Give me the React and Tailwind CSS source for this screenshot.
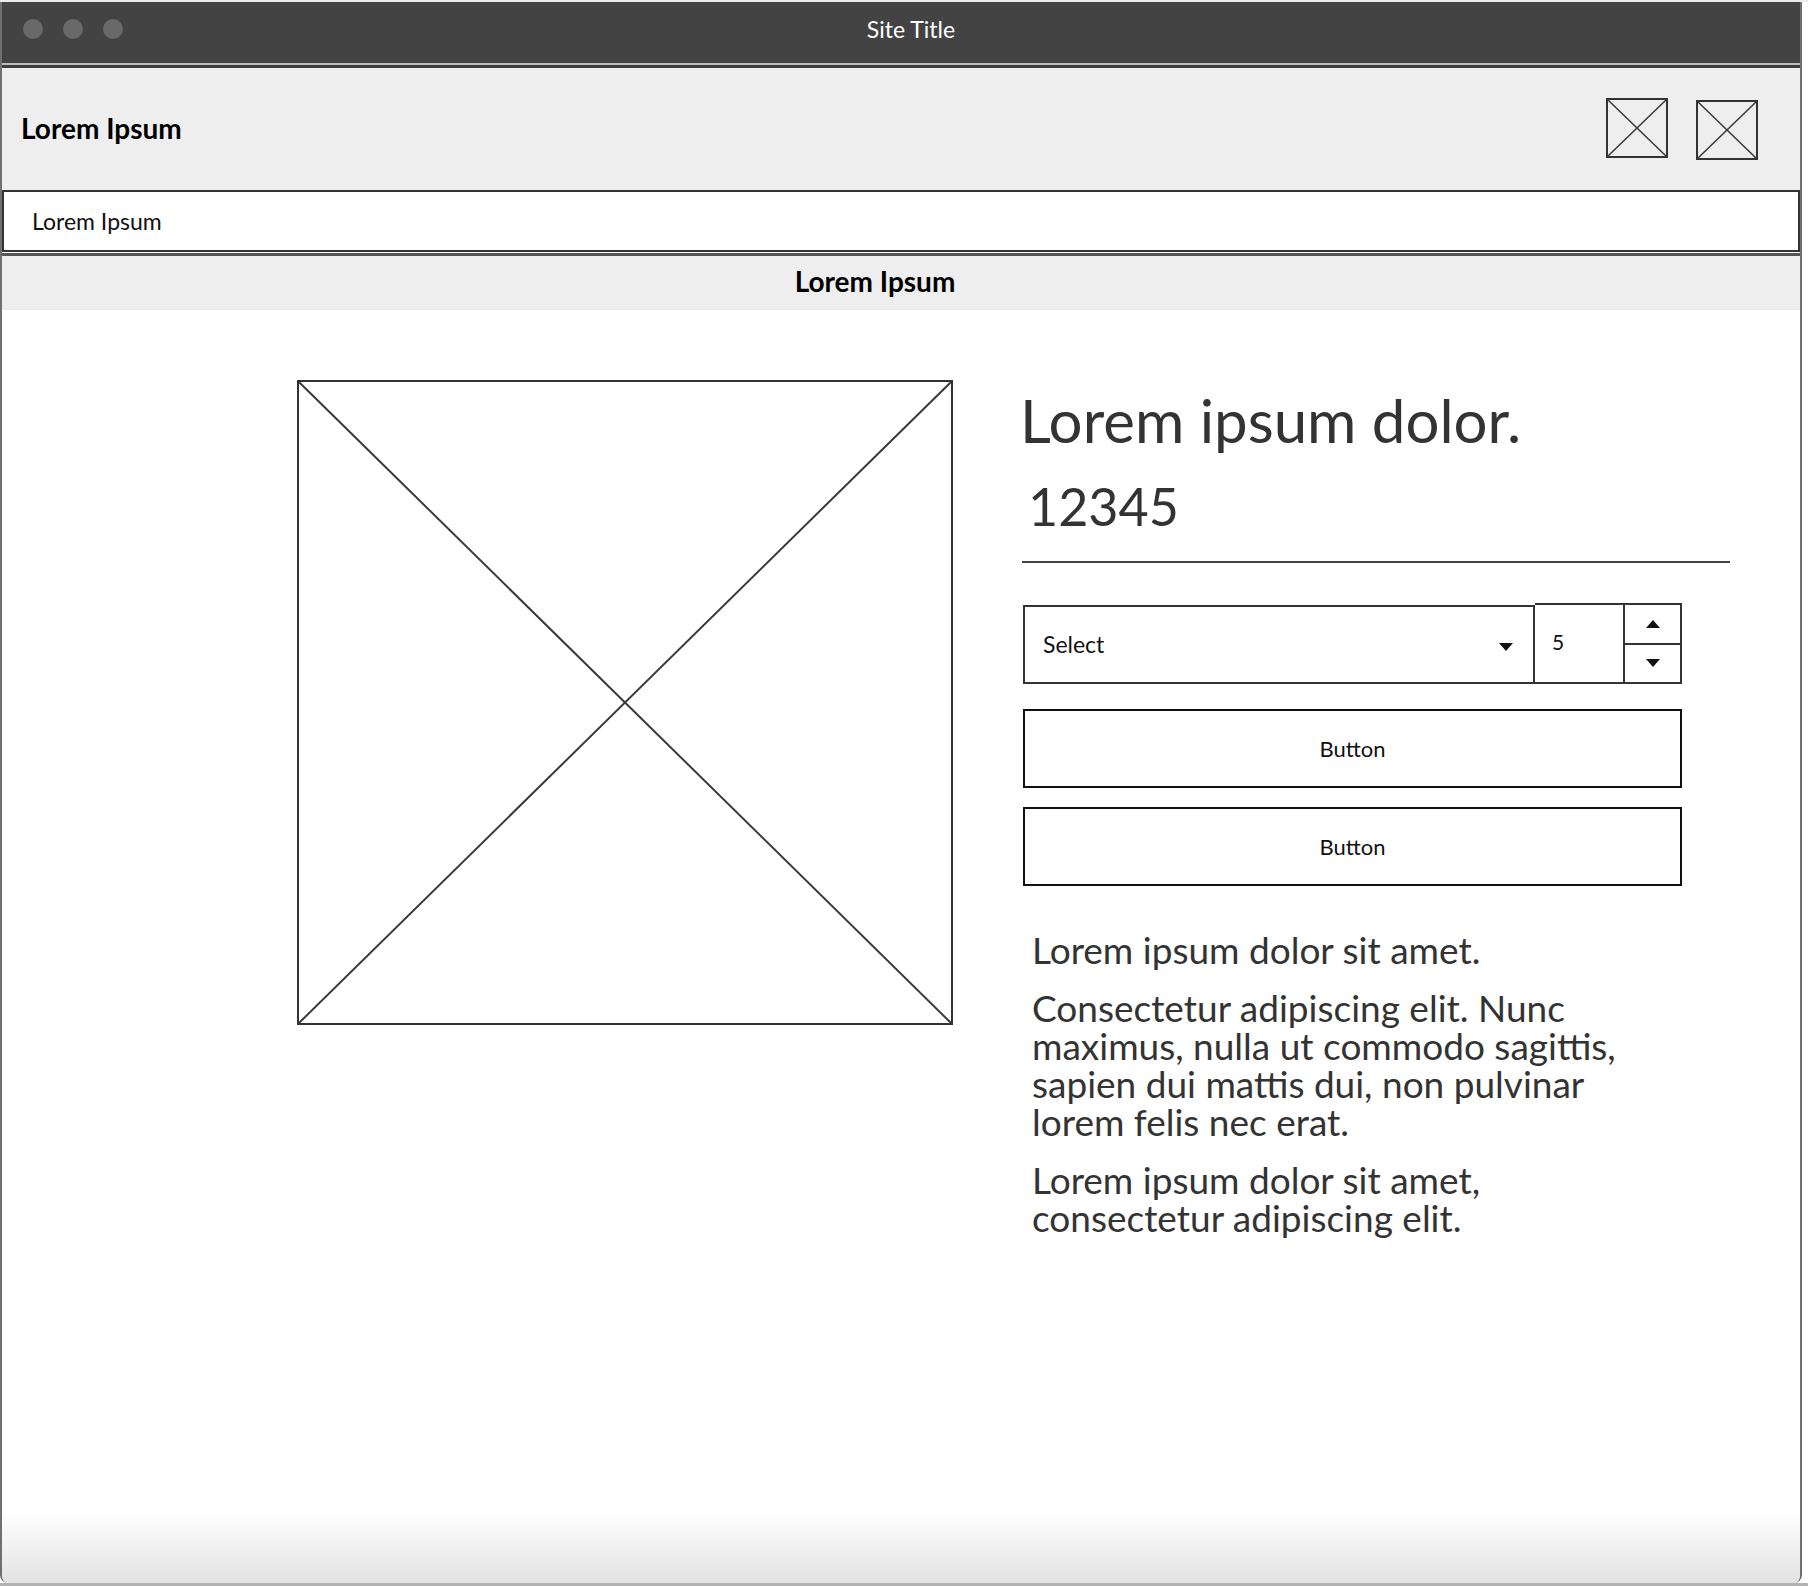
import React from 'react';

// wireframe image placeholder: box with an X
function Placeholder({ className, stroke = 1.5 }) {
  return (
    <div className={`border-2 border-[#333] bg-transparent ${className}`}>
      <svg className="block w-full h-full" viewBox="0 0 100 100" preserveAspectRatio="none">
        <line x1="0" y1="0" x2="100" y2="100" stroke="#3a3a3a" strokeWidth={stroke} vectorEffect="non-scaling-stroke" />
        <line x1="100" y1="0" x2="0" y2="100" stroke="#3a3a3a" strokeWidth={stroke} vectorEffect="non-scaling-stroke" />
      </svg>
    </div>
  );
}

function Caret({ up = false }) {
  return (
    <svg width="14" height="8" viewBox="0 0 14 8" className="block">
      {up ? <path d="M0 8 L7 0 L14 8 Z" fill="#111" /> : <path d="M0 0 L14 0 L7 8 Z" fill="#111" />}
    </svg>
  );
}

export default function App() {
  return (
    <div className="w-[1808px] h-[1586px] bg-white flex flex-col font-['Lato',sans-serif]">
      <div className="h-[2px] bg-[#ececec]" />
      <div className="w-[1802px] flex-1 flex flex-col border-x-2 border-[#707070] rounded-b-[8px] overflow-hidden">
        {/* title bar */}
        <div className="h-[63px] shrink-0 bg-[#434343] grid grid-cols-[1fr_auto_1fr] items-center border-b-2 border-[#bdbdbd]">
          <div className="flex items-center gap-[20px] pl-[21px] mb-[8px]">
            <span className="w-[20px] h-[20px] rounded-full bg-[#696969] blur-[0.6px]" />
            <span className="w-[20px] h-[20px] rounded-full bg-[#696969] blur-[0.6px]" />
            <span className="w-[20px] h-[20px] rounded-full bg-[#696969] blur-[0.6px]" />
          </div>
          <div className="text-white text-[23px] pl-[20px] mb-[6px]">Site Title</div>
          <div />
        </div>

        {/* header */}
        <div className="h-[125px] shrink-0 bg-[#eeeeee] border-t-[3px] border-[#3c3c3c] flex items-center pl-[19px] pr-[42px]">
          <div className="text-[28px] font-bold text-black mb-[3px]">Lorem Ipsum</div>
          <div className="ml-auto flex items-start gap-[28px]">
            <Placeholder className="w-[62px] h-[60px]" />
            <Placeholder className="w-[62px] h-[60px] mt-[2px]" />
          </div>
        </div>

        {/* input */}
        <div className="h-[62px] shrink-0 bg-white border-2 border-[#333] flex items-center pl-[28px] text-[23px] text-[#111]">
          Lorem Ipsum
        </div>

        {/* subheader bar */}
        <div className="mt-[1px] h-[57px] shrink-0 bg-[#eeeeee] border-t-[3px] border-[#555] flex items-center justify-center pr-[52px] text-[28px] font-bold text-black">
          <span className="mb-[5px]">Lorem Ipsum</span>
        </div>

        {/* main */}
        <div className="flex-1 flex pt-[70px] pl-[295px]">
          <Placeholder className="w-[656px] h-[645px] shrink-0" stroke={2} />

          <div className="ml-[67px] w-[720px] flex flex-col text-[#333]">
            <div className="mt-[4px] text-[60px] leading-[72px] whitespace-nowrap">Lorem ipsum dolor.</div>
            <div className="mt-[19px] pl-[8px] text-[52px] leading-[62px]">12345</div>
            <div className="mt-[24px] ml-[2px] w-[708px] h-[2px] bg-[#444]" />

            {/* select + number stepper */}
            <div className="mt-[42px] ml-[3px] flex items-start text-[#111]">
              <div className="w-[512px] h-[79px] border-2 border-[#333] flex items-center pl-[18px] pr-[20px] text-[23px]">
                <span>Select</span>
                <span className="ml-auto mt-[4px]"><Caret /></span>
              </div>
              <div className="-mt-[2px] flex">
                <div className="w-[90px] h-[81px] border-2 border-l-0 border-[#333] flex items-center pl-[17px] text-[21px]">
                  <span className="-mt-[4px]">5</span>
                </div>
                <div className="w-[57px] h-[81px] border-2 border-l-0 border-[#333] flex flex-col">
                  <div className="flex-1 border-b-2 border-[#333] flex items-center justify-center"><Caret up /></div>
                  <div className="flex-1 flex items-center justify-center"><Caret /></div>
                </div>
              </div>
            </div>

            <button className="mt-[25px] ml-[3px] w-[659px] h-[79px] border-2 border-[#111] bg-white text-[22px] text-[#111] flex items-center justify-center">
              Button
            </button>
            <button className="mt-[19px] ml-[3px] w-[659px] h-[79px] border-2 border-[#111] bg-white text-[22px] text-[#111] flex items-center justify-center">
              Button
            </button>

            <div className="mt-[45px] pl-[12px] text-[37px] leading-[38px] text-[#333] whitespace-nowrap">
              <p className="mb-[20px]">Lorem ipsum dolor sit amet.</p>
              <p className="mb-[20px]">
                Consectetur adipiscing elit. Nunc<br />
                maximus, nulla ut commodo sagittis,<br />
                sapien dui mattis dui, non pulvinar<br />
                lorem felis nec erat.
              </p>
              <p>
                Lorem ipsum dolor sit amet,<br />
                consectetur adipiscing elit.
              </p>
            </div>
          </div>
        </div>

        {/* bottom shading */}
        <div className="h-[72px] shrink-0 bg-gradient-to-b from-white to-[#e3e3e3]" />
      </div>
      <div className="h-[3px] bg-[#b3b3b3]" />
    </div>
  );
}
